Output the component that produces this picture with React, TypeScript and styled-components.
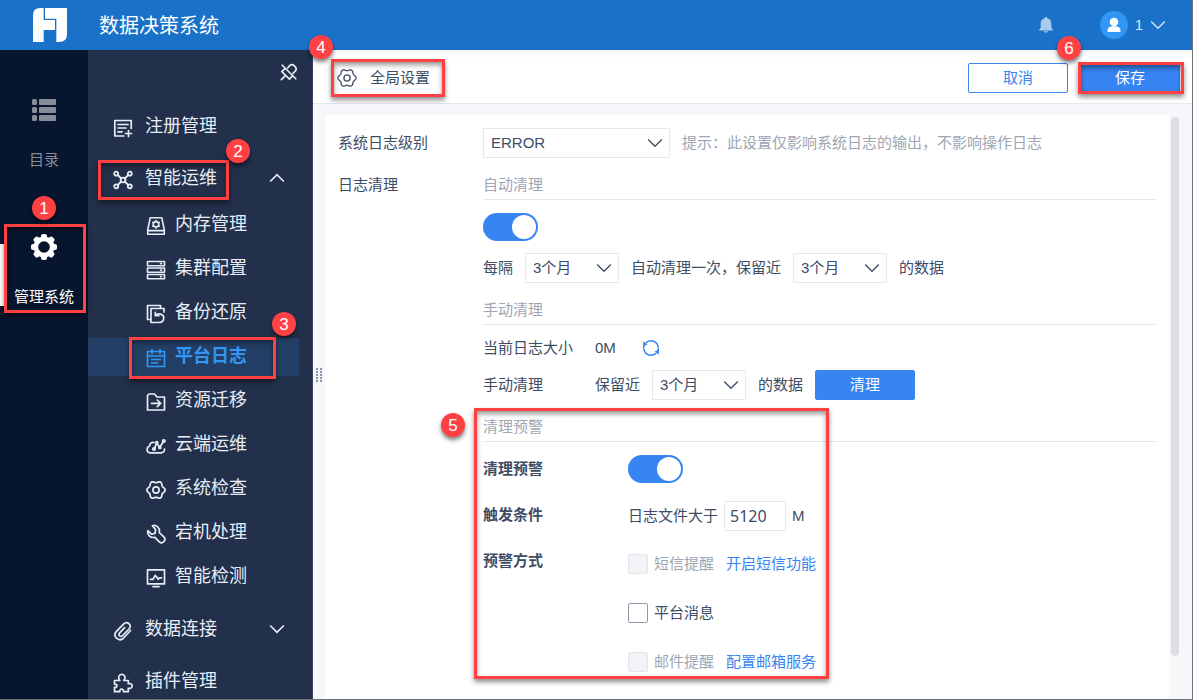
import React from "react";
import styled, { createGlobalStyle, css } from "styled-components";

const color = {
  header: "#1a72c8",
  rail: "#07152e",
  menu: "#22304b",
  active: "#233f66",
  primary: "#3685f2",
  text: "#3d4d66",
  muted: "#9ea6b3",
  line: "#e6e8ec",
  mark: "#ff4144",
};

const GlobalStyle = createGlobalStyle`
  * { box-sizing: border-box; }
  body {
    margin: 0;
    background: #f5f7fa;
    color: ${color.text};
    font-family: "Liberation Sans", "Noto Sans CJK SC", sans-serif;
    font-size: 15px;
    line-height: 20px;
  }
  button, input, select { font: inherit; color: inherit; margin: 0; }
  ul { list-style: none; margin: 0; padding: 0; }
  h2, h3 { margin: 0; font: inherit; }
`;

const Page = styled.div`
  display: flex;
  flex-direction: column;
  height: 100vh;
  min-width: 960px;
  overflow: hidden;
  border-right: 1px solid #6f7276;
  border-bottom: 1px solid #6f7276;
`;

const Header = styled.header`
  display: flex;
  align-items: center;
  flex: none;
  height: 50px;
  padding: 0 26px 0 33px;
  background: ${color.header};
  color: #fff;
`;

const SystemName = styled.h1`
  flex: 1;
  margin: 0 0 0 32px;
  padding-top: 2px;
  font-size: 20px;
  font-weight: 400;
  line-height: 28px;
`;

const IconButton = styled.button`
  display: inline-flex;
  align-items: center;
  justify-content: center;
  padding: 0;
  border: 0;
  background: none;
  color: inherit;
  cursor: pointer;
`;

const UserButton = styled(IconButton)`
  gap: 7px;
  margin-left: 46px;
  color: #d5e6f8;
`;

const Avatar = styled.span`
  display: flex;
  align-items: center;
  justify-content: center;
  width: 28px;
  height: 28px;
  border-radius: 50%;
  background: #3296f4;
  color: #fff;
`;

const Body = styled.div`
  display: flex;
  flex: 1;
  min-height: 0;
`;

const Rail = styled.nav`
  display: flex;
  flex-direction: column;
  gap: 48px;
  flex: none;
  width: 88px;
  padding-top: 37px;
  background: ${color.rail};
`;

const RailItem = styled.a<{ $active?: boolean }>`
  position: relative;
  display: flex;
  flex-direction: column;
  align-items: center;
  gap: 27px;
  padding: 10px 0 6px;
  color: ${(p) => (p.$active ? "#fff" : "#868c98")};
  text-decoration: none;
`;

const ActiveBar = styled.span`
  position: absolute;
  left: 0;
  top: 20px;
  bottom: 7px;
  width: 4px;
  background: #fff;
`;

const Menu = styled.nav`
  flex: none;
  width: 225px;
  padding-right: 13px;
  border-right: 1px solid #35435d;
  background: ${color.menu};
  color: #e8edf5;
`;

const MenuTools = styled.div`
  display: flex;
  justify-content: flex-end;
  align-items: flex-start;
  height: 50px;
  padding: 13px 1px 0 0;
`;

const menuRow = css`
  display: flex;
  align-items: center;
  color: inherit;
  text-decoration: none;
  font-size: 18px;
  line-height: 24px;
  svg { flex: none; }
`;

const MenuRow = styled.a`
  ${menuRow}
  justify-content: space-between;
  height: 52px;
  padding: 0 14px 0 25px;
`;

const SubList = styled.ul`
  display: flex;
  flex-direction: column;
  gap: 6px;
  padding: 2px 0 7px;
`;

const SubRow = styled.a<{ $active?: boolean }>`
  ${menuRow}
  height: 38px;
  padding: 0 0 2px 58px;
  ${(p) =>
    p.$active &&
    css`
      background: ${color.active};
      color: #3296f4;
      font-weight: 700;
    `}
`;

const RowLabel = styled.span<{ $gap: number }>`
  position: relative;
  display: inline-flex;
  align-items: center;
  gap: ${(p) => p.$gap}px;
  > svg { margin-top: 4px; }
`;

const Main = styled.main`
  display: flex;
  flex-direction: column;
  flex: 1;
  min-width: 0;
`;

const Toolbar = styled.div`
  display: flex;
  align-items: center;
  gap: 12px;
  flex: none;
  height: 54px;
  padding: 3px 12px 0 24px;
  border-bottom: 1px solid ${color.line};
  background: linear-gradient(#f3f4f6, #fff 8px);
`;

const ToolbarTitle = styled.h2`
  position: relative;
  display: flex;
  align-items: center;
  gap: 13px;
  margin-right: auto;
`;

const Anchor = styled.div`
  position: relative;
`;

const Button = styled.button<{ $primary?: boolean }>`
  display: block;
  width: 100px;
  height: 30px;
  padding: 0;
  border: 1px solid ${color.primary};
  border-radius: 2px;
  background: ${(p) => (p.$primary ? color.primary : "#fff")};
  color: ${(p) => (p.$primary ? "#fff" : color.primary)};
  cursor: pointer;
`;

const Stage = styled.div`
  display: flex;
  flex: 1;
  min-height: 0;
  padding: 11px 11px 0 3px;
`;

const Grip = styled.div`
  display: flex;
  align-items: center;
  flex: none;
  width: 9px;
  padding-bottom: 62px;
`;

const Card = styled.form`
  display: flex;
  flex: 1;
  min-width: 0;
  background: #fff;
`;

const Fields = styled.div`
  display: flex;
  flex-direction: column;
  gap: 12px;
  flex: 1;
  min-width: 0;
  padding: 13px 13px 0;
`;

const Field = styled.div`
  display: grid;
  grid-template-columns: 145px minmax(0, 1fr);
`;

const FieldName = styled.span`
  line-height: 30px;
`;

const Groups = styled.div`
  display: flex;
  flex-direction: column;
  gap: 12px;
`;

const Group = styled.section`
  position: relative;
  display: flex;
  flex-direction: column;
  gap: 12px;
`;

const GroupTitle = styled.h3`
  height: 30px;
  margin-bottom: 1px;
  border-bottom: 1px solid ${color.line};
  color: ${color.muted};
  line-height: 29px;
`;

const Line = styled.div<{ $gap?: number }>`
  display: flex;
  align-items: center;
  gap: ${(p) => p.$gap ?? 12}px;
`;

const Pair = styled.div`
  display: grid;
  grid-template-columns: 112px minmax(0, 1fr);
  align-items: center;
`;

const Hint = styled.span`
  color: ${color.muted};
`;

const SelectWrap = styled.span<{ $width: number }>`
  position: relative;
  display: inline-flex;
  width: ${(p) => p.$width}px;
  color: ${color.text};
  svg { position: absolute; right: 7px; top: 7px; pointer-events: none; }
`;

const Select = styled.select`
  appearance: none;
  width: 100%;
  height: 30px;
  padding: 0 24px 0 7px;
  border: 1px solid ${color.line};
  border-radius: 0;
  background: #fff;
`;

const Switch = styled.input`
  appearance: none;
  display: block;
  width: 55px;
  height: 28px;
  padding: 2px;
  border-radius: 14px;
  background: ${color.primary};
  cursor: pointer;
  &::before {
    content: "";
    display: block;
    width: 24px;
    height: 24px;
    margin-left: auto;
    border-radius: 50%;
    background: #fff;
  }
  &:not(:checked) { background: #c9ced6; }
  &:not(:checked)::before { margin-left: 0; }
`;

const Warnings = styled.div`
  display: grid;
  grid-template-columns: 145px minmax(0, 1fr);
  row-gap: 18px;
`;

const WarnName = styled.span`
  font-weight: 700;
  line-height: 28px;
`;

const MethodName = styled(WarnName)`
  line-height: 24px;
`;

const NumberBox = styled.input`
  width: 62px;
  height: 30px;
  padding: 0 5px;
  border: 1px solid ${color.line};
  border-radius: 2px;
  font-family: "Noto Sans", sans-serif;
  font-size: 16px;
`;

const Checks = styled.div`
  display: flex;
  flex-direction: column;
  gap: 19px;
`;

const CheckLine = styled.div`
  display: flex;
  align-items: center;
  gap: 12px;
  height: 30px;
`;

const CheckLabel = styled.label<{ $off?: boolean }>`
  display: inline-flex;
  align-items: center;
  gap: 6px;
  color: ${(p) => (p.$off ? color.muted : color.text)};
`;

const Check = styled.input`
  appearance: none;
  width: 20px;
  height: 20px;
  border: 1px solid #9199a8;
  border-radius: 2px;
  background: #fff;
  &:checked { background: ${color.primary}; }
  &:disabled { border-color: #e3e5ea; background: #f2f3f7; }
`;

const Link = styled.a`
  color: ${color.primary};
  text-decoration: none;
`;

const RefreshButton = styled(IconButton)`
  color: ${color.primary};
`;

const ScrollTrack = styled.div`
  flex: none;
  width: 12px;
  padding: 2px;
  background: #f7f8fa;
`;

const ScrollThumb = styled.div`
  height: 93%;
  border-radius: 4px;
  background: #dcdee3;
`;

const MarkBox = styled.span<{ $top: number; $left: number; $right?: number; $bottom: number; $width?: number }>`
  position: absolute;
  z-index: 2;
  top: ${(p) => p.$top}px;
  left: ${(p) => p.$left}px;
  bottom: ${(p) => p.$bottom}px;
  ${(p) => (p.$width ? `width: ${p.$width}px;` : `right: ${p.$right}px;`)}
  border: 3px solid ${color.mark};
  box-shadow: 0 3px 5px rgba(0, 0, 0, 0.45), inset 0 3px 5px rgba(0, 0, 0, 0.4);
  pointer-events: none;
`;

const MarkDot = styled.span<{ $top: number; $left: number }>`
  position: absolute;
  z-index: 3;
  top: ${(p) => p.$top}px;
  left: ${(p) => p.$left}px;
  width: 24px;
  height: 24px;
  border-radius: 50%;
  background: ${color.mark};
  box-shadow: 0 3px 4px rgba(0, 0, 0, 0.5);
  color: #fff;
  font-size: 17px;
  font-weight: 400;
  line-height: 25px;
  text-align: center;
  pointer-events: none;
`;

type GlyphProps = { size?: number; width?: number; children: React.ReactNode };

const Glyph = ({ size = 20, width = 1.6, children }: GlyphProps) => (
  <svg
    width={size}
    height={size}
    viewBox="0 0 20 20"
    fill="none"
    stroke="currentColor"
    strokeWidth={width}
    strokeLinejoin="round"
    strokeLinecap="round"
    aria-hidden="true"
  >
    {children}
  </svg>
);

const Chevron = ({ up = false, width = 1.4 }: { up?: boolean; width?: number }) => (
  <svg width="16" height="16" viewBox="0 0 16 16" fill="none" stroke="currentColor" strokeWidth={width} aria-hidden="true">
    <path d={up ? "M1.2 11.5 8 4.700l6.800 6.800" : "M1.200 4.500 8 11.300l6.800-6.800"} />
  </svg>
);

const Logo = () => (
  <svg width="34" height="34" viewBox="22 18 102 102" fill="#fff" aria-hidden="true">
    <path d="M22 120V40Q22 18 44 18H54V54H88V84H54V120Z" />
    <path d="M58 18H124V96Q124 120 100 120H92V50H58Z" />
  </svg>
);

const BellIcon = () => (
  <svg width="16" height="18" viewBox="0 0 16 18" fill="#a9cbee" aria-hidden="true">
    <path d="M8 1c.8 0 1.300.5 1.300 1.300 2.500.6 4 2.600 4 5.200V11.500l1.500 2.200v.9H1.200v-.9l1.500-2.200V7.500c0-2.600 1.500-4.600 4-5.200C6.700 1.500 7.200 1 8 1ZM5.800 15.300h4.400c-.3.900-1.100 1.400-2.200 1.400s-1.900-.5-2.200-1.400Z" />
  </svg>
);

const PersonIcon = () => (
  <svg width="14" height="16" viewBox="0 0 14 16" fill="currentColor" aria-hidden="true">
    <circle cx="7" cy="5" r="4.300" />
    <path d="M.5 15v-1.500C.5 11 2 10 4.800 9.300h4.400C12 10 13.500 11 13.500 13.500V15Z" />
  </svg>
);

const DirectoryIcon = () => (
  <svg width="26" height="26" viewBox="0 0 26 26" fill="currentColor" aria-hidden="true">
    {[2, 10, 18].map((y) => (
      <React.Fragment key={y}>
        <rect x="1" y={y} width="5" height="6" rx="1.500" />
        <rect x="8" y={y} width="17" height="6" rx="1" />
      </React.Fragment>
    ))}
  </svg>
);

const GearSolidIcon = () => (
  <svg width="26" height="26" viewBox="0 0 26 26" aria-hidden="true">
    <g fill="currentColor">
      <circle cx="13" cy="13" r="10.500" />
      {[0, 45, 90, 135].map((a) => (
        <rect key={a} x="10" y="0" width="6" height="26" rx="2" transform={`rotate(${a} 13 13)`} />
      ))}
    </g>
    <circle cx="13" cy="13" r="5.800" fill={color.rail} />
  </svg>
);

// Outline of a cog with six soft lobes, traced in polar coordinates.
const gearPath =
  Array.from({ length: 72 }, (_, i) => {
    const a = (i * Math.PI) / 36;
    const r = 8.2 + 0.9 * Math.cos(6 * a);
    return `${i ? "L" : "M"}${(10 + r * Math.cos(a)).toFixed(2)} ${(10 + r * Math.sin(a)).toFixed(2)}`;
  }).join("") + "Z";

const UnpinIcon = () => (
  <Glyph size={18} width={1.9}>
    <path d="M2.500 2.500l15 15M8.500 5.500l2.500-2.800c3-2.400 8.200 1.600 6.600 5.600l-3.100 3.200M5.500 6.200 2 9.500l8.500 8.500 3-3.400M6 14l-4.500 4.500" />
  </Glyph>
);

const RegisterIcon = () => (
  <Glyph width={1.7}>
    <path d="M18.200 10.500V2.500H1.800v15.500h9M5 6.500h10M5 10h8M5 13.800h4M15.500 12.500v6M12.500 15.500h6" />
  </Glyph>
);

const OpsIcon = () => (
  <Glyph width={1.8}>
    <circle cx="3.200" cy="3.700" r="2" />
    <circle cx="16.800" cy="3.700" r="2" />
    <circle cx="3.200" cy="16.300" r="2" />
    <circle cx="16.800" cy="16.300" r="2" />
    <circle cx="10" cy="10" r="2.400" />
    <path d="M4.800 5l3.300 3.300M15.200 5l-3.300 3.300M4.800 15l3.300-3.300M15.200 15l-3.300-3.300" />
  </Glyph>
);

const MemoryIcon = () => (
  <Glyph>
    <path d="M4.200 1.800h11.600l2.500 12.200v4.200H1.700V14ZM1.700 14.600h16.600" />
    <circle cx="10" cy="8.300" r="2.700" />
    <path d="M10 4.500v.8M10 11.300v.8M6.700 6.400l.7.400M12.600 9.800l.7.400M6.700 10.200l.7-.4M12.600 6.800l.7-.4" />
  </Glyph>
);

const ClusterIcon = () => (
  <Glyph>
    <path d="M1.500 1.500h17v4.200h-17ZM1.500 8h17v4.200h-17ZM1.500 14.500h17v4.200h-17ZM14.500 3.600h1M14.500 10.100h1M14.500 16.600h1" />
  </Glyph>
);

const BackupIcon = () => (
  <Glyph width={1.7}>
    <path d="M4.500 15.500h-3v-14h13v3M18 8V4.500H5v14h5M9.500 11.500c2.500-2.800 8.300-1.700 8.300 2.600 0 3.400-3.300 5-6.300 4.200M9.300 8.300v3.400h3.500" />
  </Glyph>
);

const LogIcon = () => (
  <Glyph width={1.7}>
    <path d="M1.500 3.500h17v15h-17ZM1.500 8h17M6 1.500v4M14 1.500v4M5.500 11.500h9M5.500 15h6" />
  </Glyph>
);

const MigrateIcon = () => (
  <Glyph width={1.7}>
    <path d="M1.500 18V3.500L3 2h5.500L11 5h7.500v13ZM5.500 11.300h9M11.300 8l3.300 3.300-3.300 3.300" />
  </Glyph>
);

const CloudIcon = () => (
  <Glyph width={1.7}>
    <path d="M8 6.500C5.500 5.800 3.500 7.600 3.600 10 .2 11 .2 16.500 4 16.800h11c2.600 0 3.800-2 3.500-3.800M8.500 12.200l2.300-5 3 4 3.200-5" />
    <circle cx="8" cy="13" r="1.200" />
    <circle cx="17.800" cy="5" r="1.200" />
    <circle cx="10.800" cy="6.500" r="1" />
    <circle cx="13.800" cy="11.500" r="1" />
  </Glyph>
);

const GearIcon = ({ width = 1.7 }: { width?: number }) => (
  <Glyph width={width}>
    <path d={gearPath} />
    <circle cx="10" cy="10" r="3.100" />
  </Glyph>
);

const WrenchIcon = () => (
  <Glyph width={1.7}>
    <path d="M6.500 1.700c3.800-1.300 8 2.500 6.700 6.800l4.900 4.700c2.600 3-1.800 7.400-4.800 4.700l-4.600-4.700C4.500 14.500.7 10.600 1.900 6.600l3.700 3.600 3.300-.7.800-3.700Z" />
  </Glyph>
);

const DetectIcon = () => (
  <Glyph width={1.7}>
    <path d="M1.500 1.800h17v14h-17ZM7 18.700h6M4.500 11.300H7l2.200-4 3 4 1.300-1.500h2" />
  </Glyph>
);

const ClipIcon = () => (
  <Glyph width={1.7}>
    <path d="M17.500 9.500 10.800 16.800c-2.400 2.400-5.300 2.200-7.300.4-2-2-1.900-4.900.2-7.100l6.800-7c3.800-3.700 8.800 1 5.500 4.900l-6.300 6.500c-2.300 2.200-5-.3-3-2.700l5-5.200" />
  </Glyph>
);

const PluginIcon = () => (
  <Glyph width={1.7}>
    <path d="M1.500 7.500h5.300C4.500 4.500 6 1.300 8.800 1.300s4.400 3.200 2 6.200h4.500v3.200c5.200-1.500 5.200 5.800 0 4.500v3.500H10.500c.5-3.500-4.200-3.500-3.700 0H1.500v-4.300c3.300.3 3.300-3.600 0-3.300Z" />
  </Glyph>
);

const RefreshIcon = () => (
  <Glyph size={18} width={1.7}>
    <path d="M5 3.700A8 8 0 0 1 17.900 8.800M2.100 11.200A8 8 0 0 0 15 16.300" />
    <path d="M1.700 9.500a8 8 0 0 1 1-3M18.300 10.500a8 8 0 0 1-1 3" />
    <path d="M1.300 2.500v5.200l5-1.700ZM18.700 17.500v-5.200l-5 1.700Z" fill="currentColor" stroke="none" />
  </Glyph>
);

const GripIcon = () => (
  <svg width="8" height="16" viewBox="0 0 8 16" fill="#8b93a3" aria-hidden="true">
    {[0, 3, 6, 9, 12].map((y) => (
      <React.Fragment key={y}>
        <rect x="0" y={y} width="2" height="2" />
        <rect x="4" y={y} width="2" height="2" />
      </React.Fragment>
    ))}
  </svg>
);

const subItems = [
  { name: "内存管理", icon: <MemoryIcon /> },
  { name: "集群配置", icon: <ClusterIcon /> },
  { name: "备份还原", icon: <BackupIcon /> },
  { name: "平台日志", icon: <LogIcon />, active: true },
  { name: "资源迁移", icon: <MigrateIcon /> },
  { name: "云端运维", icon: <CloudIcon /> },
  { name: "系统检查", icon: <GearIcon /> },
  { name: "宕机处理", icon: <WrenchIcon /> },
  { name: "智能检测", icon: <DetectIcon /> },
];

const Dropdown = ({ label, width, options }: { label: string; width: number; options: string[] }) => (
  <SelectWrap $width={width}>
    <Select aria-label={label} defaultValue={options[0]}>
      {options.map((o) => (
        <option key={o}>{o}</option>
      ))}
    </Select>
    <Chevron width={1.3} />
  </SelectWrap>
);

const months = ["3个月", "6个月", "12个月"];

export default function App() {
  return (
    <>
      <GlobalStyle />
      <Page>
        <Header>
          <Logo />
          <SystemName>数据决策系统</SystemName>
          <IconButton type="button" aria-label="消息">
            <BellIcon />
          </IconButton>
          <UserButton type="button">
            <Avatar>
              <PersonIcon />
            </Avatar>
            1
            <Chevron />
          </UserButton>
        </Header>

        <Body>
          <Rail>
            <RailItem href="#directory">
              <DirectoryIcon />
              目录
            </RailItem>
            <RailItem href="#manage" $active>
              <ActiveBar />
              <GearSolidIcon />
              管理系统
              <MarkBox $top={0} $left={4} $right={2} $bottom={0} />
              <MarkDot $top={-28} $left={32}>1</MarkDot>
            </RailItem>
          </Rail>

          <Menu>
            <MenuTools>
              <IconButton type="button" aria-label="取消固定">
                <UnpinIcon />
              </IconButton>
            </MenuTools>
            <MenuRow href="#register">
              <RowLabel $gap={12}>
                <RegisterIcon />
                注册管理
              </RowLabel>
            </MenuRow>
            <MenuRow href="#ops">
              <RowLabel $gap={12}>
                <OpsIcon />
                智能运维
                <MarkBox $top={-6} $left={-15} $right={-12} $bottom={-10} />
                <MarkDot $top={-27} $left={113}>2</MarkDot>
              </RowLabel>
              <Chevron up width={1.7} />
            </MenuRow>
            <SubList>
              {subItems.map((item) => (
                <li key={item.name}>
                  <SubRow href="#" $active={item.active}>
                    <RowLabel $gap={9}>
                      {item.icon}
                      {item.name}
                      {item.active && (
                        <>
                          <MarkBox $top={-7} $left={-17} $right={-29} $bottom={-11} />
                          <MarkDot $top={-32} $left={126}>3</MarkDot>
                        </>
                      )}
                    </RowLabel>
                  </SubRow>
                </li>
              ))}
            </SubList>
            <MenuRow href="#connection">
              <RowLabel $gap={12}>
                <ClipIcon />
                数据连接
              </RowLabel>
              <Chevron width={1.7} />
            </MenuRow>
            <MenuRow href="#plugin">
              <RowLabel $gap={12}>
                <PluginIcon />
                插件管理
              </RowLabel>
            </MenuRow>
          </Menu>

          <Main>
            <Toolbar>
              <ToolbarTitle>
                <GearIcon width={1.3} />
                全局设置
                <MarkBox $top={-9} $left={-6} $right={-15} $bottom={-9} />
                <MarkDot $top={-33} $left={-28}>4</MarkDot>
              </ToolbarTitle>
              <Button type="button">取消</Button>
              <Anchor>
                <Button type="submit" form="log-settings" $primary>
                  保存
                </Button>
                <MarkBox $top={-1} $left={-2} $right={-4} $bottom={-1} />
                <MarkDot $top={-27} $left={-23}>6</MarkDot>
              </Anchor>
            </Toolbar>

            <Stage>
              <Grip>
                <GripIcon />
              </Grip>
              <Card id="log-settings" onSubmit={(e) => e.preventDefault()}>
                <Fields>
                  <Field>
                    <FieldName>系统日志级别</FieldName>
                    <Line>
                      <Dropdown label="系统日志级别" width={187} options={["ERROR", "WARN", "INFO", "DEBUG"]} />
                      <Hint>提示：此设置仅影响系统日志的输出，不影响操作日志</Hint>
                    </Line>
                  </Field>

                  <Field>
                    <FieldName>日志清理</FieldName>
                    <Groups>
                      <Group>
                        <GroupTitle>自动清理</GroupTitle>
                        <Switch type="checkbox" role="switch" aria-label="自动清理" defaultChecked />
                        <Line>
                          <span>每隔</span>
                          <Dropdown label="清理间隔" width={94} options={months} />
                          <span>自动清理一次，保留近</span>
                          <Dropdown label="自动保留时长" width={94} options={months} />
                          <span>的数据</span>
                        </Line>
                      </Group>

                      <Group>
                        <GroupTitle>手动清理</GroupTitle>
                        <Pair>
                          <span>当前日志大小</span>
                          <Line $gap={26}>
                            <span>0M</span>
                            <RefreshButton type="button" aria-label="刷新">
                              <RefreshIcon />
                            </RefreshButton>
                          </Line>
                        </Pair>
                        <Pair>
                          <span>手动清理</span>
                          <Line>
                            <span>保留近</span>
                            <Dropdown label="手动保留时长" width={94} options={months} />
                            <span>的数据</span>
                            <Button type="button" $primary>
                              清理
                            </Button>
                          </Line>
                        </Pair>
                      </Group>

                      <Group>
                        <GroupTitle>清理预警</GroupTitle>
                        <Warnings>
                          <WarnName>清理预警</WarnName>
                          <Switch type="checkbox" role="switch" aria-label="清理预警" defaultChecked />
                          <WarnName>触发条件</WarnName>
                          <Line $gap={6}>
                            <label htmlFor="log-size">日志文件大于</label>
                            <NumberBox id="log-size" type="text" inputMode="numeric" defaultValue="5120" />
                            <span>M</span>
                          </Line>
                          <MethodName>预警方式</MethodName>
                          <Checks>
                            <CheckLine>
                              <CheckLabel $off>
                                <Check type="checkbox" disabled />
                                短信提醒
                              </CheckLabel>
                              <Link href="#sms">开启短信功能</Link>
                            </CheckLine>
                            <CheckLine>
                              <CheckLabel>
                                <Check type="checkbox" />
                                平台消息
                              </CheckLabel>
                            </CheckLine>
                            <CheckLine>
                              <CheckLabel $off>
                                <Check type="checkbox" disabled />
                                邮件提醒
                              </CheckLabel>
                              <Link href="#mail">配置邮箱服务</Link>
                            </CheckLine>
                          </Checks>
                        </Warnings>
                        <MarkBox $top={-4} $left={-9} $width={355} $bottom={-2} />
                        <MarkDot $top={1} $left={-42}>5</MarkDot>
                      </Group>
                    </Groups>
                  </Field>
                </Fields>
                <ScrollTrack>
                  <ScrollThumb />
                </ScrollTrack>
              </Card>
            </Stage>
          </Main>
        </Body>
      </Page>
    </>
  );
}
